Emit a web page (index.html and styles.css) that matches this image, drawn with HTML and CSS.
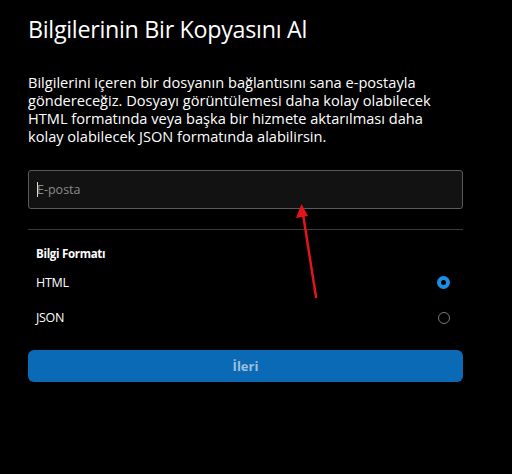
FILE: index.html
```html
<!DOCTYPE html>
<html lang="tr">
<head>
<meta charset="utf-8">
<link rel="stylesheet" href="styles.css">
</head>
<body>
<main class="panel">
  <h1 class="title">Bilgilerinin Bir Kopyasını Al</h1>
  <p class="desc">Bilgilerini içeren bir dosyanın bağlantısını sana e-postayla göndereceğiz. Dosyayı görüntülemesi daha kolay olabilecek HTML formatında veya başka bir hizmete aktarılması daha kolay olabilecek JSON formatında alabilirsin.</p>
  <div class="field"><span class="caret"></span><span class="placeholder">E-posta</span></div>
  <hr class="divider">
  <div class="section-label">Bilgi Formatı</div>
  <div class="options">
    <div class="option"><span>HTML</span><span class="radio radio-on"></span></div>
    <div class="option"><span>JSON</span><span class="radio"></span></div>
  </div>
  <button class="btn">İleri</button>
</main>
<svg class="arrow" width="512" height="474" viewBox="0 0 512 474">
  <line x1="316" y1="297" x2="303" y2="214" stroke="#e3141b" stroke-width="2.5" stroke-linecap="round"/>
  <polygon points="301.5,204 296,218 308,216" fill="#e3141b"/>
</svg>
</body>
</html>
```
FILE: styles.css
```css
html, body {
  margin: 0;
  background: #000;
}
body {
  width: 512px;
  height: 474px;
  position: relative;
  overflow: hidden;
  font-family: "Open Sans", "Noto Sans", sans-serif;
  color: #fff;
}
.panel {
  padding: 13px 49px 0 28px;
  display: flex;
  flex-direction: column;
}
.title {
  margin: 0;
  font-weight: 400;
  font-size: 23.3px;
  line-height: 32px;
  letter-spacing: -0.3px;
}
.desc {
  margin: 28px 0 0;
  max-width: 425px;
  font-size: 14.6px;
  line-height: 18px;
  letter-spacing: 0;
}
.field {
  margin-top: 25px;
  height: 37px;
  border: 1px solid #5a5a5a;
  border-radius: 3px;
  background: #121212;
  display: flex;
  align-items: center;
  padding-left: 8px;
}
.caret {
  width: 1px;
  height: 15px;
  background: #ddd;
}
.placeholder {
  font-size: 12.5px;
  color: #8a8a8a;
  margin-left: -1px;
}
.divider {
  margin: 20px 0 0;
  border: 0;
  border-top: 1px solid #3a3a3a;
  height: 0;
}
.section-label {
  margin-top: 16px;
  padding-left: 8px;
  font-size: 11.5px;
  font-weight: 700;
  line-height: 16px;
  letter-spacing: -0.3px;
}
.options {
  margin-top: 3px;
  display: flex;
  flex-direction: column;
}
.option {
  display: flex;
  justify-content: space-between;
  align-items: center;
  height: 35px;
  padding: 0 13px 0 8px;
  font-size: 12.5px;
  letter-spacing: -0.3px;
}
.radio {
  width: 10px;
  height: 10px;
  border-radius: 50%;
  border: 1.5px solid #7a7a7a;
}
.radio-on {
  border: 4px solid #1a8fe3;
  width: 5px;
  height: 5px;
  background: #000;
}
.btn {
  margin-top: 15px;
  height: 32px;
  border: 0;
  border-radius: 6px;
  background: #0a6ab5;
  color: #9fbfdc;
  font-family: inherit;
  font-size: 13px;
  font-weight: 700;
}
.arrow {
  position: absolute;
  left: 0;
  top: 0;
  pointer-events: none;
}
```
